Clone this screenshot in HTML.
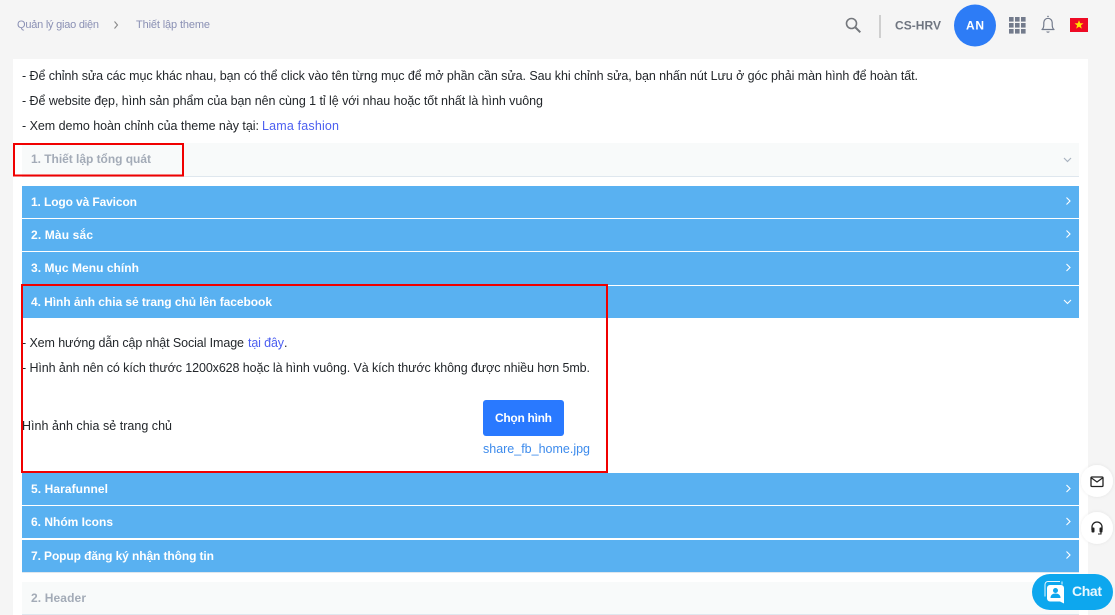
<!DOCTYPE html>
<html lang="vi"><head><meta charset="utf-8"><title>Thiết lập theme</title>
<style>
html,body{margin:0;padding:0;background:#f5f5f5;width:1115px;height:615px;overflow:hidden}
svg{display:block}
text{font-family:"Liberation Sans",sans-serif;white-space:pre}
.t{font-size:12.5px;fill:#23272b}
.b{font-size:12px;font-weight:bold;fill:#fff}
.g{font-size:12px;font-weight:bold;fill:#a3abb7}
.l{font-size:12.5px;fill:#4c5ff0}
.c{font-size:11px;fill:#8a90b4}
</style></head><body>
<svg width="1115" height="615" viewBox="0 0 1115 615" xmlns="http://www.w3.org/2000/svg">
<defs><filter id="s" x="-30%" y="-30%" width="160%" height="160%"><feDropShadow dx="0" dy="0" stdDeviation="1.500" flood-color="#000" flood-opacity=".08"/></filter></defs>
<rect width="1115" height="615" fill="#f5f5f5"/>
<rect x="13" y="59" width="1075" height="556" fill="#fff"/>

<text class="c" x="17" y="28" textLength="82" lengthAdjust="spacing">Quản lý giao diện</text>
<path d="M114.500 21.500l3 3.500-3 3.500" fill="none" stroke="#888" stroke-width="1.100"/>
<text class="c" x="136" y="28" textLength="74" lengthAdjust="spacing">Thiết lập theme</text>

<circle cx="851.500" cy="23.500" r="5" fill="none" stroke="#74777c" stroke-width="1.600"/>
<path d="M855.500 27.500l4.800 4.800" stroke="#74777c" stroke-width="2" fill="none"/>
<rect x="879" y="15" width="2" height="23" fill="#cfcfcf"/>
<text x="895" y="29.500" font-size="12" font-weight="bold" fill="#6f7580" textLength="46" lengthAdjust="spacing">CS-HRV</text>
<circle cx="975" cy="25.500" r="21" fill="#2d7cf6"/>
<text x="966" y="29.500" font-size="12" font-weight="bold" fill="#fff" textLength="18" lengthAdjust="spacing">AN</text>
<g fill="#737b8c">
<rect x="1009" y="17" width="4.600" height="4.600"/><rect x="1015" y="17" width="4.600" height="4.600"/><rect x="1021" y="17" width="4.600" height="4.600"/>
<rect x="1009" y="23" width="4.600" height="4.600"/><rect x="1015" y="23" width="4.600" height="4.600"/><rect x="1021" y="23" width="4.600" height="4.600"/>
<rect x="1009" y="29" width="4.600" height="4.600"/><rect x="1015" y="29" width="4.600" height="4.600"/><rect x="1021" y="29" width="4.600" height="4.600"/>
</g>
<path d="M1042 29.500c1.500-1 1.800-2.500 1.800-5v-2a4.200 4.200 0 0 1 8.400 0v2c0 2.500.3 4 1.800 5z" fill="none" stroke="#737b8c" stroke-width="1.200" stroke-linejoin="round"/>
<path d="M1048 17v-1.200" stroke="#737b8c" stroke-width="1.500"/>
<path d="M1046.200 31.500a1.900 1.900 0 0 0 3.600 0z" fill="#737b8c"/>
<rect x="1070" y="18" width="18" height="14" fill="#ee0a24"/>
<path d="M1079 20.200l1.200 3.100 3.300.1-2.600 2 .9 3.200-2.800-1.800-2.800 1.800.9-3.200-2.600-2 3.300-.1z" fill="#ffe600"/>

<text class="t" x="22" y="80" textLength="896" lengthAdjust="spacing">- Để chỉnh sửa các mục khác nhau, bạn có thể click vào tên từng mục để mở phần cần sửa. Sau khi chỉnh sửa, bạn nhấn nút Lưu ở góc phải màn hình để hoàn tất.</text>
<text class="t" x="22" y="105" textLength="521" lengthAdjust="spacing">- Để website đẹp, hình sản phẩm của bạn nên cùng 1 tỉ lệ với nhau hoặc tốt nhất là hình vuông</text>
<text class="t" x="22" y="130" textLength="237" lengthAdjust="spacing">- Xem demo hoàn chỉnh của theme này tại:</text>
<text class="l" x="262" y="130" textLength="77" lengthAdjust="spacing">Lama fashion</text>

<rect x="22" y="143" width="1057" height="33" fill="#f8fafa"/>
<rect x="22" y="176" width="1057" height="1" fill="#dfe7ee"/>
<text class="g" x="31" y="163" textLength="120" lengthAdjust="spacing">1. Thiết lập tổng quát</text>
<path d="M1064 158l3.500 3.500 3.500-3.500" fill="none" stroke="#a9b3c0" stroke-width="1.200"/>

<g fill="#59b1f1">
<rect x="22" y="186" width="1057" height="32"/>
<rect x="22" y="219" width="1057" height="32"/>
<rect x="22" y="252" width="1057" height="33"/>
<rect x="22" y="286" width="1057" height="32"/>
<rect x="22" y="473" width="1057" height="32"/>
<rect x="22" y="506" width="1057" height="32"/>
<rect x="22" y="540" width="1057" height="32"/>
</g>
<rect x="22" y="572" width="1057" height="1" fill="#dfe7ee"/>
<text class="b" x="31" y="206" textLength="106" lengthAdjust="spacing">1. Logo và Favicon</text>
<text class="b" x="31" y="239" textLength="62" lengthAdjust="spacing">2. Màu sắc</text>
<text class="b" x="31" y="272" textLength="108" lengthAdjust="spacing">3. Mục Menu chính</text>
<text class="b" x="31" y="306" textLength="241" lengthAdjust="spacing">4. Hình ảnh chia sẻ trang chủ lên facebook</text>
<text class="b" x="31" y="493" textLength="77" lengthAdjust="spacing">5. Harafunnel</text>
<text class="b" x="31" y="526" textLength="82" lengthAdjust="spacing">6. Nhóm Icons</text>
<text class="b" x="31" y="560" textLength="183" lengthAdjust="spacing">7. Popup đăng ký nhận thông tin</text>
<g fill="none" stroke="#fff" stroke-width="1.100">
<path d="M1066.500 197.500l3.500 3.500-3.500 3.500"/>
<path d="M1066.500 230.500l3.500 3.500-3.500 3.500"/>
<path d="M1066.500 264l3.500 3.500-3.500 3.500"/>
<path d="M1064 300l3.500 3.500 3.500-3.500"/>
<path d="M1066.500 485l3.500 3.500-3.500 3.500"/>
<path d="M1066.500 518l3.500 3.500-3.500 3.500"/>
<path d="M1066.500 551.500l3.500 3.500-3.500 3.500"/>
</g>

<text class="t" x="22" y="347" textLength="222" lengthAdjust="spacing">- Xem hướng dẫn cập nhật Social Image</text>
<text class="l" x="248" y="347" textLength="36" lengthAdjust="spacing">tại đây</text>
<text class="t" x="284" y="347">.</text>
<text class="t" x="22" y="372" textLength="568" lengthAdjust="spacing">- Hình ảnh nên có kích thước 1200x628 hoặc là hình vuông. Và kích thước không được nhiều hơn 5mb.</text>
<text class="t" x="22" y="430" textLength="150" lengthAdjust="spacing">Hình ảnh chia sẻ trang chủ</text>
<rect x="483" y="400" width="81" height="36" rx="3" fill="#2979ff"/>
<text x="495" y="422" font-size="12" font-weight="bold" fill="#fff" textLength="57" lengthAdjust="spacing">Chọn hình</text>
<text x="483" y="453" font-size="12.500" fill="#3d8bec" textLength="107" lengthAdjust="spacing">share_fb_home.jpg</text>

<rect x="22" y="582" width="1057" height="32" fill="#f8fafa"/>
<rect x="22" y="614" width="1057" height="1" fill="#dfe7ee"/>
<text class="g" x="31" y="602" textLength="55" lengthAdjust="spacing">2. Header</text>

<rect x="14" y="144" width="169" height="31.500" fill="none" stroke="#f00000" stroke-width="2"/>
<rect x="22" y="285" width="585" height="187" fill="none" stroke="#f00000" stroke-width="2"/>

<circle cx="1097" cy="481" r="16" fill="#fff" filter="url(#s)"/>
<rect x="1091" y="477" width="12" height="9.500" rx="1" fill="none" stroke="#222" stroke-width="1.300"/>
<path d="M1091.500 478l5.500 4 5.500-4" fill="none" stroke="#222" stroke-width="1.200"/>
<circle cx="1097" cy="528" r="16" fill="#fff" filter="url(#s)"/>
<path d="M1092 530v-3a5 5 0 0 1 10 0v3" fill="none" stroke="#222" stroke-width="1.300"/>
<rect x="1091.500" y="527.500" width="3" height="5" rx="1" fill="#222"/>
<rect x="1099.500" y="527.500" width="3" height="5" rx="1" fill="#222"/>
<path d="M1101 532.500v1.500h-3" fill="none" stroke="#222" stroke-width="1.100"/>

<rect x="1032" y="574" width="81" height="36" rx="18" fill="#0da7ee"/>
<path d="M1060 581.500h-12a3 3 0 0 0-3 3v12" fill="none" stroke="#fff" stroke-width="1" opacity=".9"/>
<path d="M1062 581.500v3" fill="none" stroke="#fff" stroke-width="1" opacity=".9"/>
<path d="M1050 585h11a3 3 0 0 1 3 3v15.500l-4-2h-10a3 3 0 0 1-3-3v-10.500a3 3 0 0 1 3-3z" fill="#fff"/>
<circle cx="1055.500" cy="590.500" r="2.500" fill="#0da7ee"/>
<path d="M1050.500 598c0-3 2-4.500 5-4.500s5 1.500 5 4.500z" fill="#0da7ee"/>
<text x="1072" y="596" font-size="14" font-weight="bold" fill="#e9f7fe" textLength="30" lengthAdjust="spacing">Chat</text>
</svg>
</body></html>
